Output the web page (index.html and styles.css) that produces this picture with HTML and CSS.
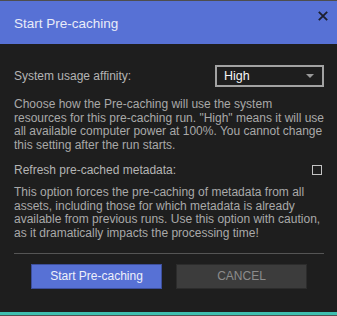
FILE: index.html
```html
<!DOCTYPE html>
<html>
<head>
<meta charset="utf-8">
<link rel="stylesheet" href="styles.css">
</head>
<body>
<div class="dialog">
  <div class="topline"></div>
  <div class="header">
    <div class="title">Start Pre-caching</div>
    <svg class="close" width="10" height="10" viewBox="0 0 10 10"><path d="M0.8 0.8 L9.2 9.2 M9.2 0.8 L0.8 9.2" stroke="#1c1f2e" stroke-width="1.8" fill="none"/></svg>
  </div>
  <div class="content">
    <div class="row first">
      <span class="label">System usage affinity:</span>
      <div class="select"><span>High</span><svg width="8" height="4" viewBox="0 0 8 4"><path d="M0 0 H8 L4 4 Z" fill="#9a9a9a"/></svg></div>
    </div>
    <p class="desc d1">Choose how the Pre-caching will use the system resources for this pre-caching run. "High" means it will use all available computer power at 100%. You cannot change this setting after the run starts.</p>
    <div class="row second">
      <span class="label">Refresh pre-cached metadata:</span>
      <span class="check"></span>
    </div>
    <p class="desc d2">This option forces the pre-caching of metadata from all assets, including those for which metadata is already available from previous runs. Use this option with caution, as it dramatically impacts the processing time!</p>
    <div class="divider"></div>
    <div class="buttons">
      <button class="btn primary">Start Pre-caching</button>
      <button class="btn cancel">CANCEL</button>
    </div>
  </div>
  <div class="footer"></div>
</div>
</body>
</html>
```
FILE: styles.css
```css
* { box-sizing: border-box; }
html, body { margin: 0; padding: 0; }
body {
  width: 337px;
  height: 316px;
  background: #1e1e1e;
  font-family: "Liberation Sans", Arial, sans-serif;
  overflow: hidden;
}
.dialog {
  width: 337px;
  height: 316px;
  display: flex;
  flex-direction: column;
  background: #1e1e1e;
}
.topline { height: 1px; background: #4e4e4e; }
.header {
  height: 43px;
  background: #5771d5;
  display: flex;
  justify-content: space-between;
  align-items: flex-start;
  padding: 0 9px 0 14px;
}
.title {
  color: #e9ecf8;
  font-size: 13.5px;
  line-height: 45px;
}
.close { margin-top: 10px; }
.content {
  flex: 1;
  padding: 0 13px 0 14px;
  display: flex;
  flex-direction: column;
}
.row {
  display: flex;
  justify-content: space-between;
  align-items: center;
}
.row.first { margin-top: 21px; height: 22px; }
.label { color: #b4b4b4; font-size: 12px; }
.select {
  width: 109px;
  height: 22px;
  border: 2px solid #a2a2a2;
  display: flex;
  align-items: center;
  justify-content: space-between;
  padding: 0 8px 0 7px;
  color: #f4f4f4;
  font-size: 12.5px;
}
.desc {
  margin: 0 -4px 0 0;
  color: #a9a9a9;
  font-size: 12px;
  line-height: 13.7px;
}
.desc.d1 { margin-top: 11px; }
.row.second { margin-top: 10px; height: 14px; padding-right: 2px; }
.check {
  width: 10px;
  height: 10px;
  border: 1px solid #c4c4c4;
}
.desc.d2 { margin-top: 9px; }
.divider {
  height: 1px;
  background: #555;
  margin-top: 12px;
}
.buttons {
  display: flex;
  gap: 14px;
  padding-left: 17px;
  margin-top: 10px;
}
.btn {
  width: 131px;
  height: 25px;
  font-family: "Liberation Sans", Arial, sans-serif;
  font-size: 12px;
  padding: 0;
}
.btn.primary {
  background: #5771d5;
  border: 1px solid #3d4f9c;
  color: #eef0fa;
}
.btn.cancel {
  background: #3c3c3c;
  border: 1px solid #2c2c2c;
  color: #8c8c8c;
}
.footer {
  height: 4px;
  border-top: 3px solid #3ec0b0;
  background: #505050;
}
```
